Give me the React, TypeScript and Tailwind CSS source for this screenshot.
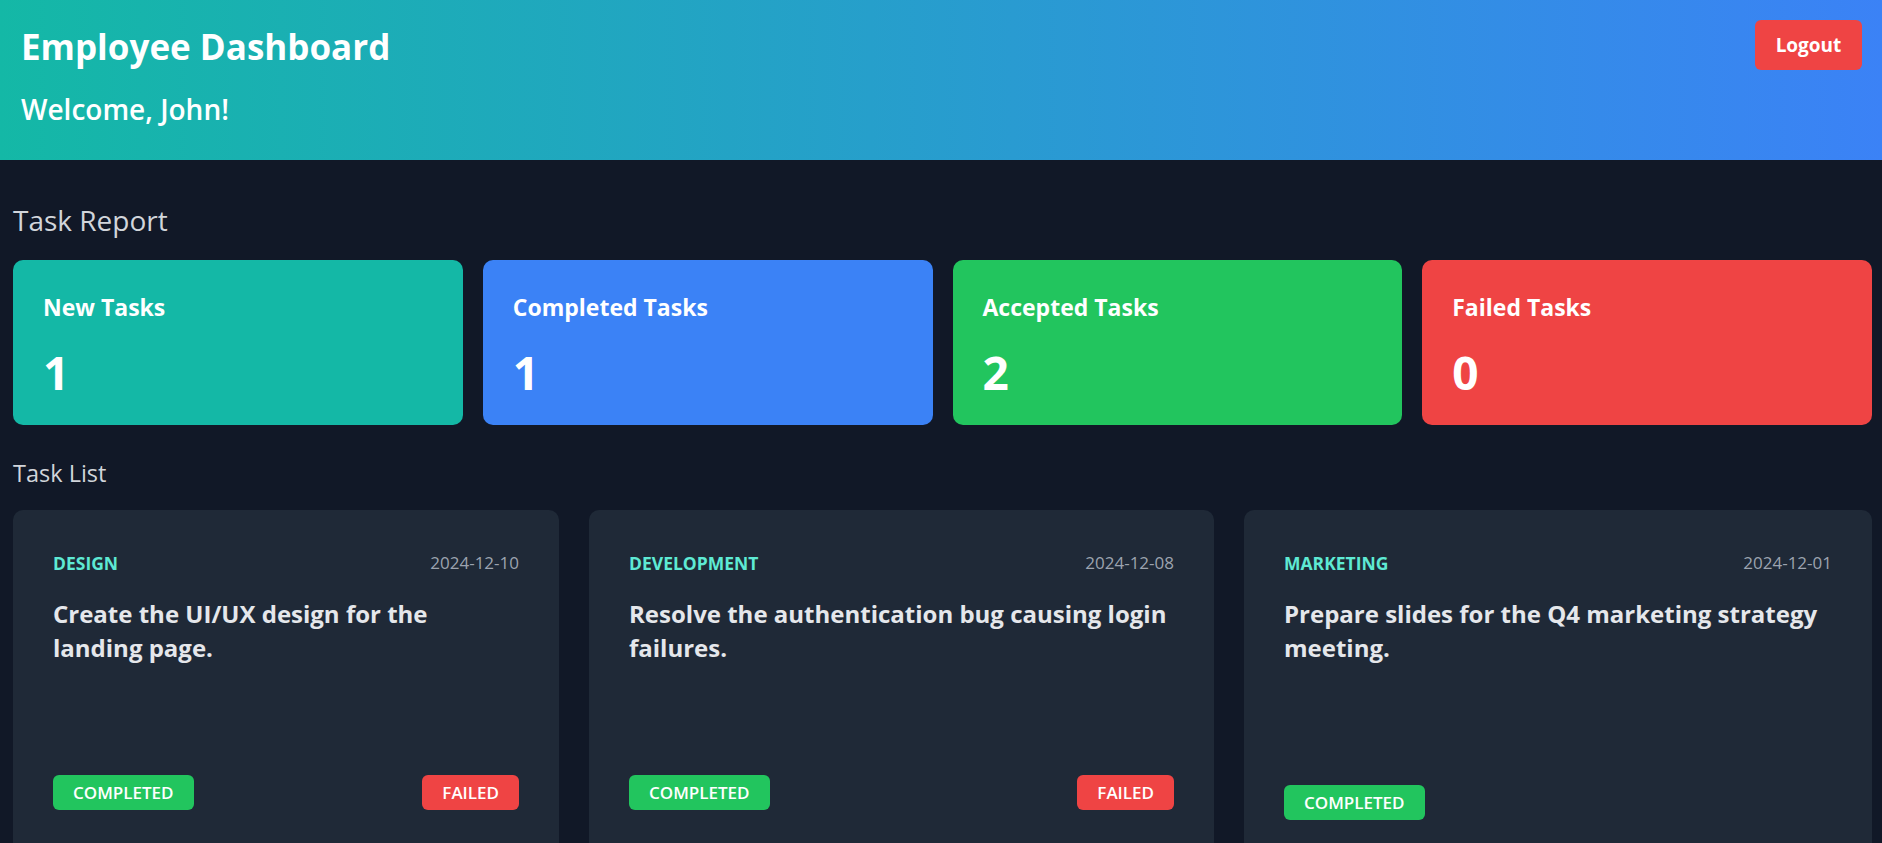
import React from "react";

type Stat = { label: string; value: number; color: string };

type Task = {
  category: string;
  date: string;
  title: string;
  width: string;
  showFailed: boolean;
};

const stats: Stat[] = [
  { label: "New Tasks", value: 1, color: "bg-[#14b8a6]" },
  { label: "Completed Tasks", value: 1, color: "bg-[#3b82f6]" },
  { label: "Accepted Tasks", value: 2, color: "bg-[#22c55e]" },
  { label: "Failed Tasks", value: 0, color: "bg-[#ef4444]" },
];

const tasks: Task[] = [
  {
    category: "DESIGN",
    date: "2024-12-10",
    title: "Create the UI/UX design for the landing page.",
    width: "w-[546px] shrink-0",
    showFailed: true,
  },
  {
    category: "DEVELOPMENT",
    date: "2024-12-08",
    title: "Resolve the authentication bug causing login failures.",
    width: "w-[625px] shrink-0",
    showFailed: true,
  },
  {
    category: "MARKETING",
    date: "2024-12-01",
    title: "Prepare slides for the Q4 marketing strategy meeting.",
    width: "flex-1",
    showFailed: false,
  },
];

const Header = () => {
  return (
    <header className="h-[160px] flex justify-between items-start pt-5 pl-[21px] pr-5 bg-linear-to-r/srgb from-[#14b8a6] to-[#3b82f6]">
      <div className="pt-[3px]">
        <h1 className="text-[35px] leading-[48px] font-bold text-white">
          Employee Dashboard
        </h1>
        <p className="mt-[20px] text-[28px] leading-[36px] font-semibold text-white">
          Welcome, John!
        </p>
      </div>
      <button className="w-[107px] h-[50px] rounded-md bg-[#ef4444] text-white text-[19px] font-bold">
        Logout
      </button>
    </header>
  );
};

const StatCard = ({ stat }: { stat: Stat }) => {
  return (
    <div className={`${stat.color} rounded-[10px] pt-[31px] pb-[30px] px-[30px]`}>
      <h3 className="text-[23px] leading-[32px] font-bold text-white">
        {stat.label}
      </h3>
      <p className="mt-[26px] text-[46px] leading-[46px] font-bold text-white">
        {stat.value}
      </p>
    </div>
  );
};

const TaskCard = ({ task }: { task: Task }) => {
  return (
    <div
      className={`${task.width} h-[350px] flex flex-col bg-[#1f2937] rounded-[10px] pt-[39px] pb-10 px-10`}
    >
      <div className="flex justify-between items-center">
        <span className="text-[17.5px] leading-[28px] font-bold text-[#5eead4]">
          {task.category}
        </span>
        <span className="text-[17px] leading-[28px] text-[#9ca3af]">
          {task.date}
        </span>
      </div>
      <h4 className="mt-5 text-[24px] leading-[34px] font-bold text-[#e5e7eb]">
        {task.title}
      </h4>
      <div
        className={`mt-auto flex justify-between ${
          task.showFailed ? "mb-[10px]" : ""
        }`}
      >
        <span className="h-[35px] px-5 flex items-center rounded-md bg-[#22c55e] text-white text-[17px] font-semibold">
          COMPLETED
        </span>
        {task.showFailed && (
          <span className="h-[35px] px-5 flex items-center rounded-md bg-[#ef4444] text-white text-[17px] font-semibold">
            FAILED
          </span>
        )}
      </div>
    </div>
  );
};

const App = () => {
  return (
    <div className="min-h-screen bg-[#111827] font-['Open_Sans',sans-serif] overflow-hidden">
      <Header />
      <main className="pl-[13px] pr-[10px] pt-[42px]">
        <h2 className="text-[28px] leading-[36px] font-medium text-[#d1d5db] mb-[22px]">
          Task Report
        </h2>
        <div className="grid grid-cols-4 gap-5">
          {stats.map((s) => (
            <StatCard key={s.label} stat={s} />
          ))}
        </div>
        <h2 className="mt-8 mb-[21px] text-[23.5px] leading-[32px] font-medium text-[#d1d5db]">
          Task List
        </h2>
        <div className="flex gap-[30px]">
          {tasks.map((t) => (
            <TaskCard key={t.category} task={t} />
          ))}
        </div>
      </main>
    </div>
  );
};

export default App;
